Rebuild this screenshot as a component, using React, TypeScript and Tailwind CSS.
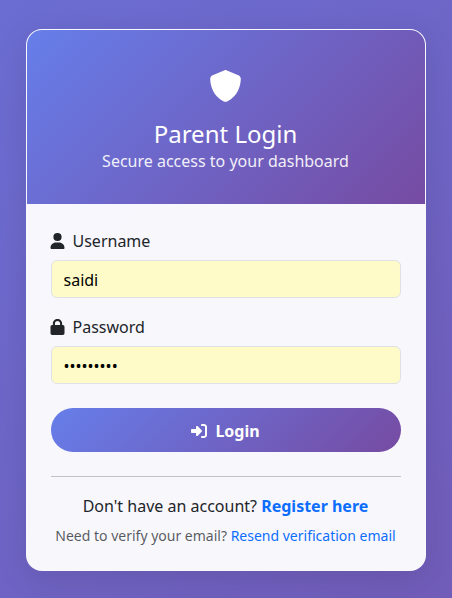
import React from "react";
import { FaLock, FaRightToBracket, FaShield, FaUser } from "react-icons/fa6";

type FieldProps = {
  id: string;
  label: string;
  type: string;
  value: string;
  icon: React.ReactNode;
};

function Field({ id, label, type, value, icon }: FieldProps) {
  return (
    <div>
      <label htmlFor={id} className="mb-[7px] flex h-6 items-center gap-2">
        {icon}
        {label}
      </label>
      <input
        id={id}
        type={type}
        defaultValue={value}
        className="block h-[38px] w-full rounded-md border border-[#dee2e6] bg-[#fffbc8] px-3 pt-0.5 text-base text-black outline-none"
      />
    </div>
  );
}

export default function App() {
  return (
    <div className="h-[598px] w-[452px] overflow-hidden bg-[linear-gradient(135deg,#6b6dd2_0%,#715cb9_100%)] pl-[25.5px] pt-[29px] font-['Noto_Sans',sans-serif] text-base text-[#212529]">
      <main className="h-[542px] w-[400px] overflow-hidden rounded-2xl border border-white/20 bg-white/95 shadow-[0_8px_32px_rgba(0,0,0,0.1)]">
        <header className="flex h-[174px] flex-col items-center bg-[linear-gradient(135deg,#667eea_0%,#764ba2_100%)] pt-10 text-white">
          <FaShield className="mb-[17px] size-8 translate-x-[-0.5px] scale-x-[1.02]" />
          <h1 className="mb-px text-2xl leading-[29px]">Parent Login</h1>
          <p className="leading-6 opacity-90">Secure access to your dashboard</p>
        </header>
        <div className="px-6 pt-[25px]">
          <form className="flex flex-col gap-[17px]" onSubmit={(e) => e.preventDefault()}>
            <Field id="username" label="Username" type="text" value="saidi" icon={<FaUser className="h-4 w-3.5 translate-x-[-0.5px] scale-x-[1.03]" />} />
            <Field id="password" label="Password" type="password" value="password1" icon={<FaLock className="h-4 w-3.5 translate-x-[-0.5px] scale-x-[1.03]" />} />
            <button
              type="submit"
              className="mt-[7px] flex h-11 w-full items-center justify-center gap-2 rounded-full bg-[linear-gradient(135deg,#667eea_0%,#764ba2_100%)] pt-0.5 font-bold text-white"
            >
              <FaRightToBracket className="size-4" />
              Login
            </button>
          </form>
          <hr className="mt-6 mb-[17px] border-[#212529]/25" />
          <div className="text-center">
            <p className="mb-[7px]">
              Don't have an account?{" "}
              <a href="#register" className="font-bold text-[#0d6efd]">Register here</a>
            </p>
            <p className="text-sm leading-[21px] text-[#212529]/75">
              Need to verify your email?{" "}
              <a href="#resend" className="text-[#0d6efd]">Resend verification email</a>
            </p>
          </div>
        </div>
      </main>
    </div>
  );
}
